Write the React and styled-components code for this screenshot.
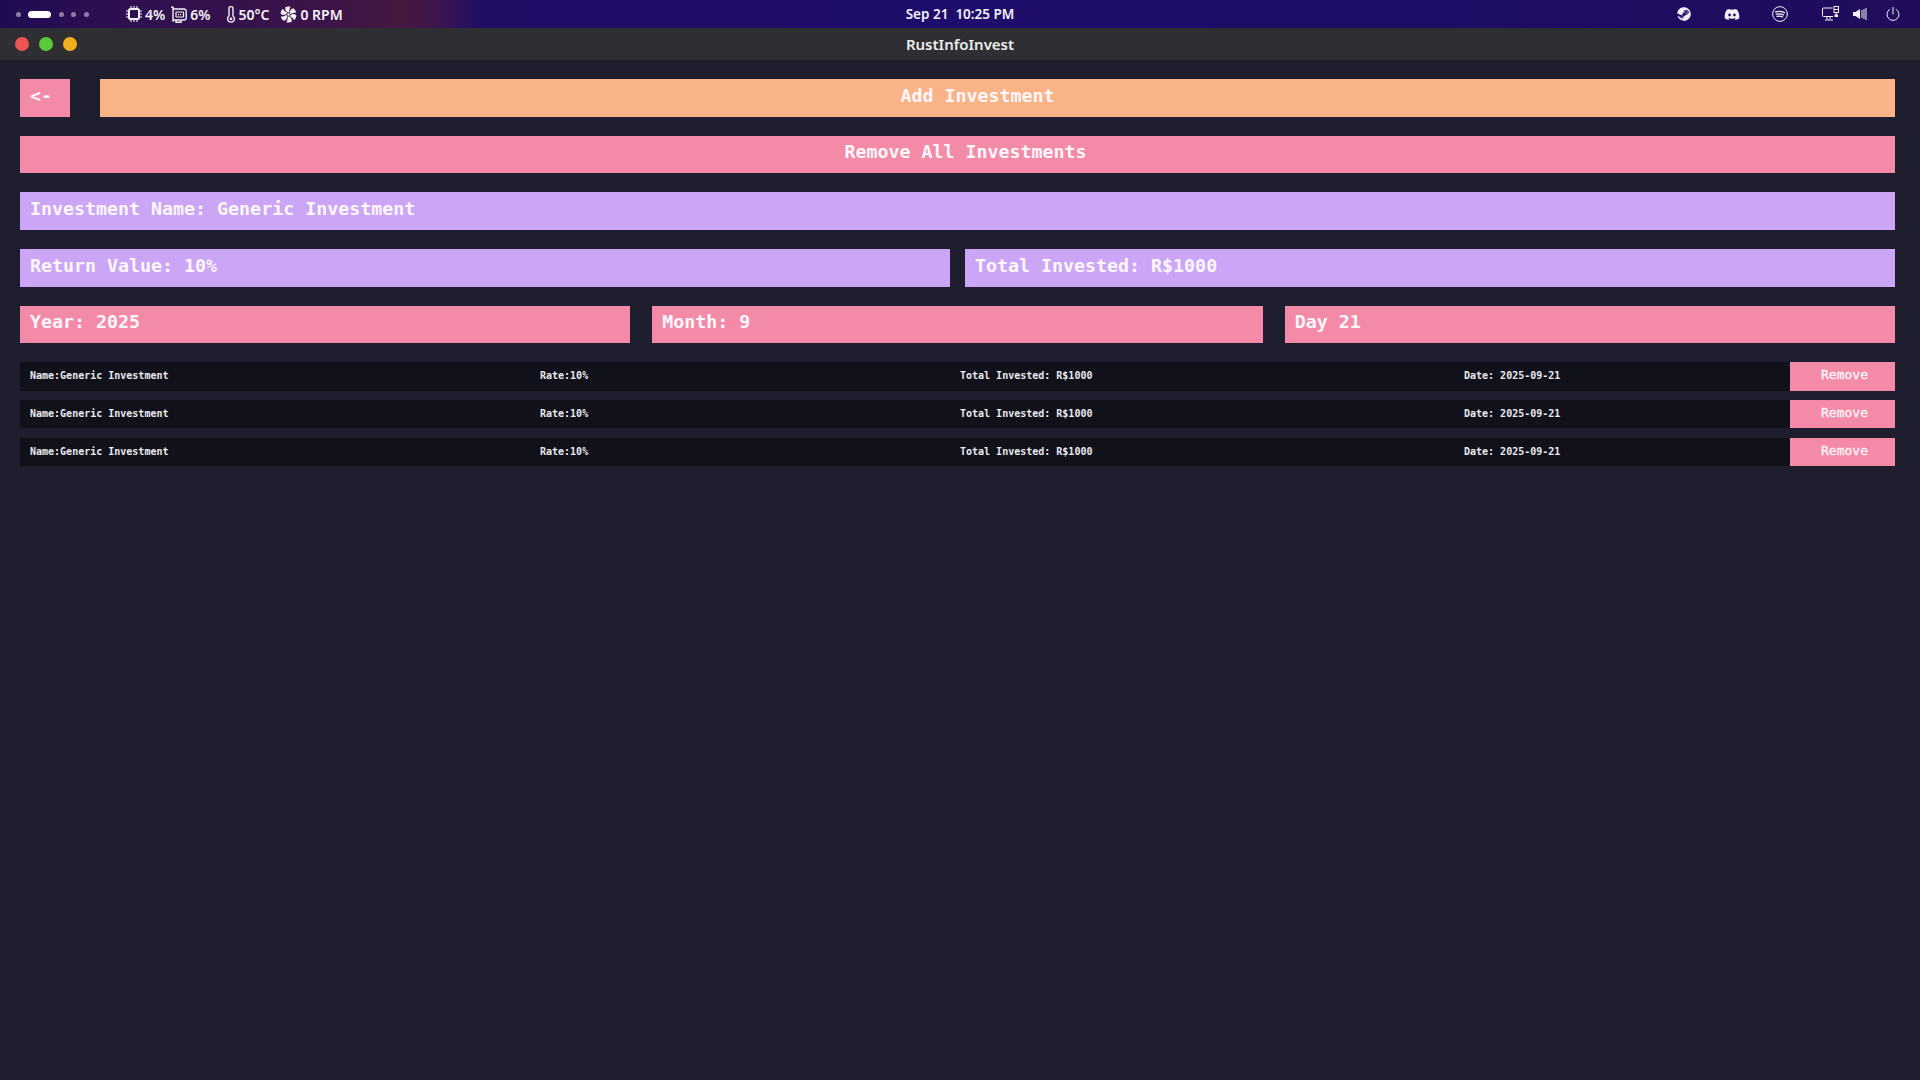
import styled, { createGlobalStyle } from 'styled-components';
import { FaSteam, FaDiscord } from 'react-icons/fa';

const GlobalStyle = createGlobalStyle`
  html, body {
    margin: 0;
    padding: 0;
    background: #1e1e2e;
  }
`;

const Screen = styled.div`
  width: 1920px;
  height: 1080px;
  overflow: hidden;
  background: #1e1e2e;
  display: flex;
  flex-direction: column;
`;

const TopBar = styled.div`
  height: 28px;
  display: grid;
  grid-template-columns: 1fr auto 1fr;
  align-items: center;
  color: #f4f2f8;
  font-family: "Noto Sans", sans-serif;
  font-weight: 600;
  font-size: 14px;
  background: linear-gradient(90deg, #200b52 0%, #2f1050 7%, #3c1449 17%, #45183f 21%, #3c1550 23%, #200d66 25%, #1e0d6a 50%, #1e0d66 76%, #210c5c 100%);
`;

const LeftGroup = styled.div`
  display: flex;
  align-items: center;
  padding-left: 15.5px;
`;

const Workspaces = styled.div`
  display: flex;
  align-items: center;
  gap: 7.5px;
  margin-right: 37.5px;
`;

const Dot = styled.span`
  width: ${p => (p.$active ? '23px' : '5px')};
  height: ${p => (p.$active ? '7px' : '5px')};
  border-radius: 4px;
  background: ${p => (p.$active ? '#ffffff' : '#8f7ba6')};
`;

const Stat = styled.div`
  display: flex;
  align-items: center;
  gap: 3px;
  margin-right: ${p => p.$gap}px;
  white-space: nowrap;
`;

const Clock = styled.div`
  white-space: pre;
  font-size: 13.5px;
`;

const Tray = styled.div`
  display: flex;
  align-items: center;
  justify-content: flex-end;
  padding-right: 20px;
  color: #f4f2f8;
`;

const TrayIcon = styled.span`
  display: flex;
  align-items: center;
  justify-content: center;
  width: ${p => p.$w}px;
  margin-left: ${p => p.$ml}px;
`;

const TitleBar = styled.div`
  height: 32px;
  position: relative;
  display: flex;
  align-items: center;
  justify-content: center;
  background: #2f2f33;
  color: #ececec;
  font-family: "Noto Sans", sans-serif;
  font-weight: 600;
  font-size: 15px;
`;

const Lights = styled.div`
  position: absolute;
  left: 15px;
  top: 9px;
  display: flex;
  gap: 10px;
`;

const Light = styled.span`
  width: 14px;
  height: 14px;
  border-radius: 50%;
  background: ${p => p.$color};
`;

const Content = styled.div`
  display: grid;
  grid-template-rows: 38px 37px 38px 38px 37px auto;
  row-gap: 19px;
  padding: 19px 25px 0 20px;
  font-family: "DejaVu Sans Mono", monospace;
  font-weight: 700;
  color: #fdf6fa;
`;

const Row = styled.div`
  display: flex;
  gap: ${p => p.$gap}px;
`;

const Field = styled.div`
  box-sizing: border-box;
  flex: ${p => (p.$fixed ? '0 0 50px' : '1 1 0')};
  min-width: 0;
  background: ${p => p.$bg};
  font-size: 18.3px;
  line-height: ${p => (p.$short ? '32px' : '33.5px')};
  padding: 0 10px;
  text-align: ${p => p.$align || 'left'};
  white-space: pre;
`;

const AddField = styled(Field)`
  padding-right: 50px;
`;

const RemoveAllField = styled(Field)`
  padding-left: 26px;
`;

const List = styled.div`
  display: flex;
  flex-direction: column;
`;

const Item = styled.div`
  height: 28px;
  display: flex;
  background: #11111b;
  font-size: 10px;
  line-height: 27px;
  color: #e9e9ee;

  &:first-child {
    height: 29px;
  }
  & + & {
    margin-top: 9px;
  }
  &:last-child {
    margin-top: 10px;
  }
`;

const Cell = styled.span`
  flex: 0 0 ${p => p.$w}px;
  padding-left: ${p => p.$pad || 0}px;
  box-sizing: border-box;
  white-space: pre;
`;

const RemoveButton = styled.span`
  flex: 0 0 105px;
  margin-left: auto;
  background: #f38ba8;
  color: #fdf6fa;
  font-size: 13px;
  font-weight: 400;
  -webkit-text-stroke: 0.3px #fdf6fa;
  line-height: 26px;
  padding-left: 31px;
  box-sizing: border-box;
`;

const CpuIcon = () => (
  <svg width="16" height="16" viewBox="0 0 16 16" fill="none" stroke="currentColor">
    <rect x="3" y="3" width="10" height="10" rx="1.5" strokeWidth="2" />
    <path d="M5 0v2M8 0v2M11 0v2M5 14v2M8 14v2M11 14v2M0 5h2M0 8h2M0 11h2M14 5h2M14 8h2M14 11h2" strokeWidth="1.1" />
  </svg>
);

const GpuIcon = () => (
  <svg width="16" height="17" viewBox="0 0 16 17" fill="none" stroke="currentColor" strokeWidth="1.4">
    <path d="M0 1.2h2v14.5" />
    <path d="M2 3h11a2.2 2.2 0 0 1 2.2 2.2v6.6A2.2 2.2 0 0 1 13 14H2" />
    <path d="M5 14v2.3h5V14" />
    <rect x="5" y="6" width="7.5" height="5" rx="0.5" strokeWidth="1.2" />
    <path d="M7 8.5h3.5" strokeWidth="1.4" strokeDasharray="1 1" />
  </svg>
);

const ThermoIcon = () => (
  <svg width="10" height="17" viewBox="0 0 10 17" fill="none" stroke="currentColor" strokeWidth="1.4">
    <path d="M3 10V2.5a2 2 0 0 1 4 0V10a3.4 3.4 0 1 1-4 0z" />
    <circle cx="5" cy="12.8" r="1.4" fill="currentColor" stroke="none" />
  </svg>
);

const FanIcon = () => (
  <svg width="17" height="17" viewBox="0 0 16 16" fill="currentColor">
    <circle cx="8" cy="8" r="1.2" />
    {[0, 60, 120, 180, 240, 300].map(a => (
      <path key={a} transform={`rotate(${a} 8 8)`} d="M7.6 6.1C5.5 5.4 4.6 3.4 5 1.2 6.6.3 8.6.2 10 .8 9 2.2 8.6 4.2 8.9 6.2z" />
    ))}
  </svg>
);

const SpotifyIcon = () => (
  <svg width="16" height="16" viewBox="0 0 16 16" fill="none" stroke="currentColor" strokeLinecap="round">
    <circle cx="8" cy="8" r="7.4" strokeWidth="1" />
    <path d="M3.6 5.9c3-.8 6-.6 8.8.7" strokeWidth="1.4" />
    <path d="M4.2 8.2c2.6-.6 5-.4 7.3.7" strokeWidth="1.2" />
    <path d="M4.8 10.4c2.1-.5 4.1-.3 5.9.6" strokeWidth="1.1" />
  </svg>
);

const NetworkIcon = () => (
  <svg width="17" height="16" viewBox="0 0 17 16" fill="none" stroke="currentColor" strokeWidth="1">
    <path d="M11 10.5H1.5a1 1 0 0 1-1-1V3a1 1 0 0 1 1-1h9" />
    <path d="M5 10.5v3M8 10.5v3M3 14h8" />
    <rect x="12" y="0.5" width="4.5" height="6" />
    <path d="M12 3.5h4.5" />
    <path d="M14.2 6.5v3" />
    <rect x="12.5" y="8.5" width="3.5" height="2.5" fill="currentColor" stroke="none" />
  </svg>
);

const VolumeIcon = () => (
  <svg width="14" height="14" viewBox="0 0 14 14" fill="none" stroke="currentColor">
    <path d="M0 5h2.5L7 2v10L2.5 9H0z" fill="currentColor" stroke="none" />
    <path d="M9 3v8M11 2v10M13 1v12" strokeWidth="1" />
  </svg>
);

const PowerIcon = () => (
  <svg width="14" height="14" viewBox="0 0 14 14" fill="none" stroke="currentColor" strokeWidth="1" strokeLinecap="round">
    <path d="M7 0.5v6.5" />
    <path d="M3.6 2.4a6 6 0 1 0 6.8 0" />
  </svg>
);

const items = [0, 1, 2];

export default function App() {
  return (
    <Screen>
      <GlobalStyle />
      <TopBar>
        <LeftGroup>
          <Workspaces>
            <Dot />
            <Dot $active />
            <Dot />
            <Dot />
            <Dot />
          </Workspaces>
          <Stat $gap={6}><CpuIcon />4%</Stat>
          <Stat $gap={15}><GpuIcon />6%</Stat>
          <Stat $gap={11}><ThermoIcon />50°C</Stat>
          <Stat $gap={0}><FanIcon />0 RPM</Stat>
        </LeftGroup>
        <Clock>Sep 21  10:25 PM</Clock>
        <Tray>
          <TrayIcon $w={14} $ml={0}><FaSteam size={14} /></TrayIcon>
          <TrayIcon $w={16} $ml={33}><FaDiscord size={17} /></TrayIcon>
          <TrayIcon $w={16} $ml={32}><SpotifyIcon /></TrayIcon>
          <TrayIcon $w={17} $ml={34}><NetworkIcon /></TrayIcon>
          <TrayIcon $w={14} $ml={14}><VolumeIcon /></TrayIcon>
          <TrayIcon $w={14} $ml={19}><PowerIcon /></TrayIcon>
        </Tray>
      </TopBar>
      <TitleBar>
        <Lights>
          <Light $color="#ee5450" />
          <Light $color="#5ac837" />
          <Light $color="#f2ae1d" />
        </Lights>
        RustInfoInvest
      </TitleBar>
      <Content>
        <Row $gap={30}>
          <Field $fixed $bg="#f38ba8">{'<-'}</Field>
          <AddField $bg="#fab387" $align="center">Add Investment</AddField>
        </Row>
        <Row>
          <RemoveAllField $short $bg="#f38ba8" $align="center">Remove All Investments</RemoveAllField>
        </Row>
        <Row>
          <Field $bg="#cba6f7">Investment Name: Generic Investment</Field>
        </Row>
        <Row $gap={15}>
          <Field $bg="#cba6f7">Return Value: 10%</Field>
          <Field $bg="#cba6f7">Total Invested: R$1000</Field>
        </Row>
        <Row $gap={22}>
          <Field $short $bg="#f38ba8">Year: 2025</Field>
          <Field $short $bg="#f38ba8">Month: 9</Field>
          <Field $short $bg="#f38ba8">Day 21</Field>
        </Row>
        <List>
          {items.map(i => (
            <Item key={i}>
              <Cell $w={520} $pad={10}>Name:Generic Investment</Cell>
              <Cell $w={420}>Rate:10%</Cell>
              <Cell $w={504}>Total Invested: R$1000</Cell>
              <Cell $w={200}>Date: 2025-09-21</Cell>
              <RemoveButton>Remove</RemoveButton>
            </Item>
          ))}
        </List>
      </Content>
    </Screen>
  );
}
